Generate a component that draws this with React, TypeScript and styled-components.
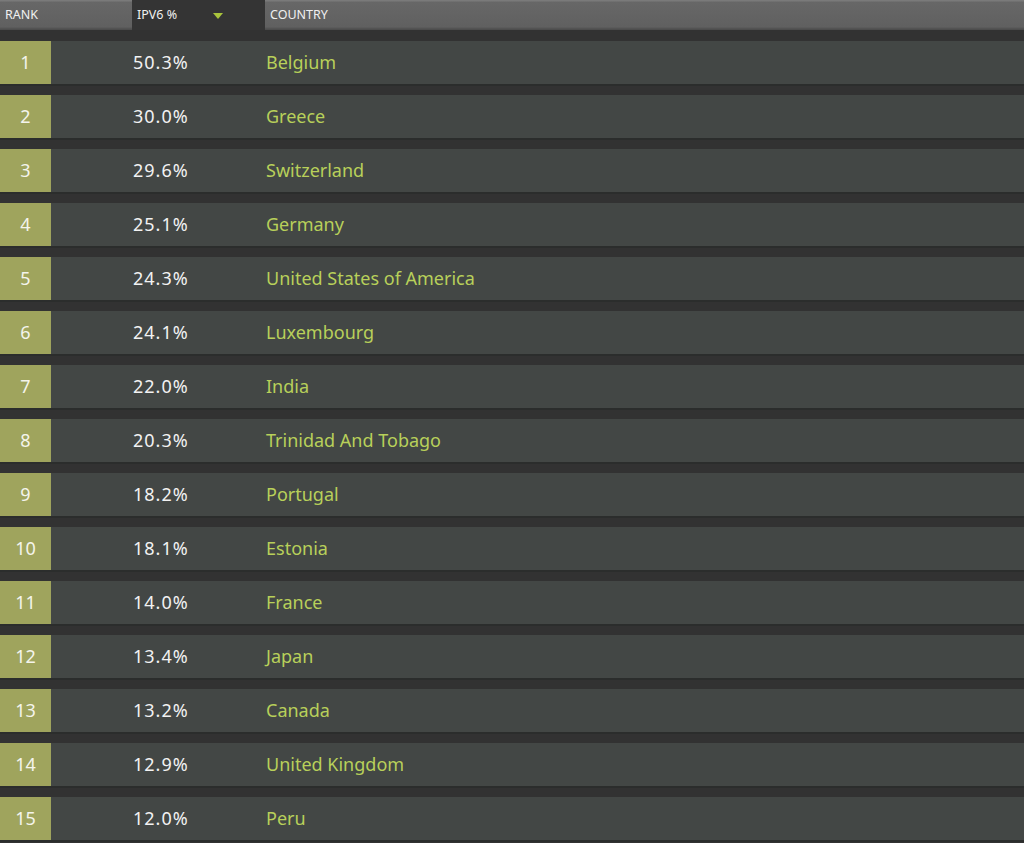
import styled, { createGlobalStyle } from 'styled-components';

const GlobalStyle = createGlobalStyle`
	html, body {
		margin: 0;
		padding: 0;
		background: #323232;
	}
	body {
		font-family: 'Noto Sans', 'Open Sans', sans-serif;
	}
`;

const rows: [string, string][] = [
	['50.3%', 'Belgium'],
	['30.0%', 'Greece'],
	['29.6%', 'Switzerland'],
	['25.1%', 'Germany'],
	['24.3%', 'United States of America'],
	['24.1%', 'Luxembourg'],
	['22.0%', 'India'],
	['20.3%', 'Trinidad And Tobago'],
	['18.2%', 'Portugal'],
	['18.1%', 'Estonia'],
	['14.0%', 'France'],
	['13.4%', 'Japan'],
	['13.2%', 'Canada'],
	['12.9%', 'United Kingdom'],
	['12.0%', 'Peru'],
];

const Table = styled.div`
	width: 1024px;
	height: 843px;
	overflow: hidden;
	background: #323232;
`;

const Header = styled.div`
	display: grid;
	grid-template-columns: 132px 133px 1fr;
	height: 30px;
	margin-bottom: 11px;
`;

const HeadCell = styled.div<{ $active?: boolean }>`
	display: flex;
	align-items: center;
	padding: 0 5px 2px;
	font-size: 12.5px;
	color: #f0f0f0;
	background: ${(p) => (p.$active ? '#343434' : 'linear-gradient(#7a7a7a 0, #7a7a7a 1px, #676767 2px, #606060 27px, #565656 28px, #4a4a4a 30px)')};
	justify-content: ${(p) => (p.$active ? 'space-between' : 'flex-start')};
	padding-right: ${(p) => (p.$active ? '42px' : '5px')};
`;

const SortArrow = styled.span`
	width: 0;
	height: 0;
	border-left: 5px solid transparent;
	border-right: 5px solid transparent;
	border-top: 6px solid #a9c43c;
	margin-top: 4px;
`;

const Rows = styled.div`
	display: flex;
	flex-direction: column;
	gap: 9px;
`;

const Row = styled.div`
	display: grid;
	grid-template-columns: 51px 82px 133px 1fr;
	height: 43px;
	align-items: center;
	background: #434745;
	border-bottom: 2px solid #2b2d2c;
	font-size: 18px;
	padding-bottom: 0;
`;

const Rank = styled.div`
	height: 100%;
	display: flex;
	align-items: center;
	justify-content: center;
	padding-bottom: 2px;
	box-sizing: border-box;
	background: #9fa45d;
	color: #f4f4ec;
`;

const Percent = styled.div`
	grid-column: 3;
	margin-top: -2px;
	letter-spacing: 1px;
	color: #f2f2f2;
`;

const Country = styled.div`
	margin-top: -2px;
	color: #b8d05a;
`;

export default function App() {
	return (
		<>
			<GlobalStyle />
			<Table>
				<Header>
					<HeadCell>RANK</HeadCell>
					<HeadCell $active>
						IPV6 %
						<SortArrow />
					</HeadCell>
					<HeadCell>COUNTRY</HeadCell>
				</Header>
				<Rows>
					{rows.map(([pct, country], i) => (
						<Row key={country}>
							<Rank>{i + 1}</Rank>
							<Percent>{pct}</Percent>
							<Country>{country}</Country>
						</Row>
					))}
				</Rows>
			</Table>
		</>
	);
}
